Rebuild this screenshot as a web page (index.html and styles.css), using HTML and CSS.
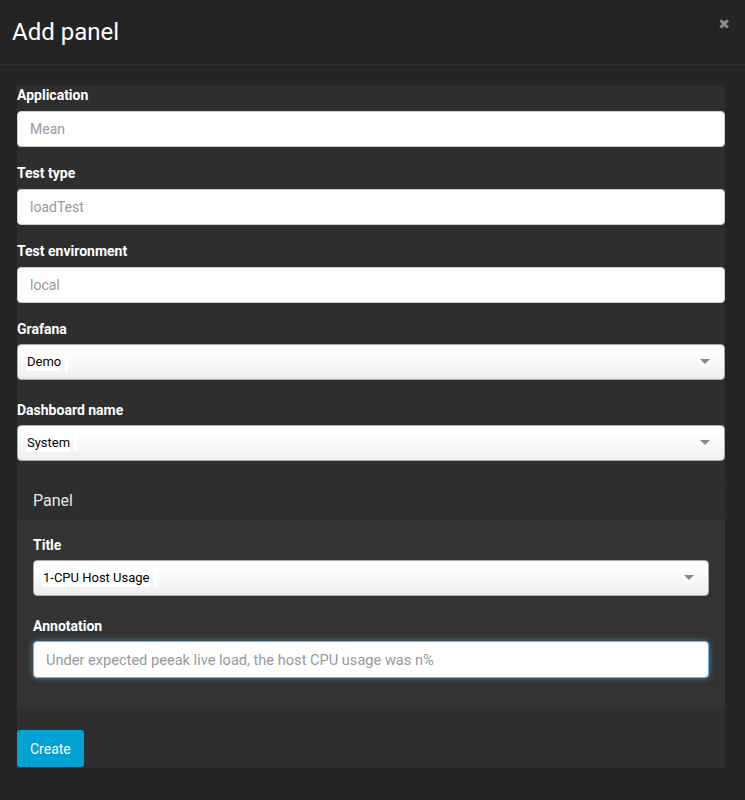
FILE: index.html
```html
<!DOCTYPE html>
<html>
<head>
<meta charset="utf-8">
<link rel="stylesheet" href="styles.css">
</head>
<body>
<div class="modal">
  <div class="modal-header">
    <h1 class="modal-title">Add panel</h1>
    <span class="close">&#x2716;</span>
  </div>
  <div class="modal-body">
    <form class="form">
      <div class="group group-text">
        <label class="label">Application</label>
        <input class="input" placeholder="Mean">
      </div>
      <div class="group group-text">
        <label class="label">Test type</label>
        <input class="input" placeholder="loadTest">
      </div>
      <div class="group group-text">
        <label class="label">Test environment</label>
        <input class="input" placeholder="local">
      </div>
      <div class="group group-select">
        <label class="label">Grafana</label>
        <div class="select"><span class="chosen">Demo</span><span class="cursor"></span><span class="arrow"></span></div>
      </div>
      <div class="group group-select">
        <label class="label">Dashboard name</label>
        <div class="select"><span class="chosen">System</span><span class="cursor"></span><span class="arrow"></span></div>
      </div>
      <div class="panel">
        <div class="panel-heading">Panel</div>
        <div class="panel-body">
          <div class="group group-select">
            <label class="label">Title</label>
            <div class="select"><span class="chosen">1-CPU Host Usage</span><span class="cursor"></span><span class="arrow"></span></div>
          </div>
          <div class="group">
            <label class="label">Annotation</label>
            <input class="input input-focus" placeholder="Under expected peeak live load, the host CPU usage was n%">
          </div>
        </div>
      </div>
      <button type="button" class="btn">Create</button>
    </form>
  </div>
</div>
</body>
</html>
```
FILE: styles.css
```css
* { box-sizing: border-box; }
html, body {
  margin: 0;
  padding: 0;
  background: #242424;
  font-family: Roboto, "Liberation Sans", sans-serif;
  color: #fff;
}
.modal {
  width: 745px;
  height: 800px;
  background: #242424;
}
.modal-header {
  position: relative;
  height: 65px;
  border-bottom: 1px solid #2c2c2c;
  padding: 0 12px;
  display: flex;
  align-items: center;
}
.modal-title {
  margin: 0;
  font-size: 24px;
  font-weight: 400;
  color: #fff;
  line-height: 30px;
}
.close {
  position: absolute;
  right: 15px;
  top: 16px;
  font-size: 14px;
  color: #8a8a8a;
  font-family: "DejaVu Sans", sans-serif;
}
.modal-body {
  padding: 20px 20px 32px 17px;
}
.form {
  background: #2e2e2e;
  display: flex;
  flex-direction: column;
}
.group {
  display: flex;
  flex-direction: column;
  margin-bottom: 16px;
}
.group-select { margin-bottom: 20px; }
.label {
  font-size: 14px;
  font-weight: 700;
  line-height: 20px;
  margin-bottom: 5px;
  color: #fff;
}
.group-text .label { margin-bottom: 6px; }
.input {
  height: 36px;
  width: 100%;
  border: 1px solid #cfcfcf;
  border-radius: 4px;
  background: #fff;
  padding: 0 12px;
  font-family: Roboto, "Liberation Sans", sans-serif;
  font-size: 14px;
  color: #555;
  outline: none;
}
.input::placeholder { color: #999; }
.input-focus {
  border-color: #66afe9;
  box-shadow: 0 0 6px rgba(102, 175, 233, 0.6);
  height: 37px;
  font-size: 14.6px;
}
.select {
  position: relative;
  height: 36px;
  border: 1px solid #aaa;
  border-radius: 4px;
  background: linear-gradient(#fff 20%, #eee);
  display: flex;
  align-items: center;
  padding-left: 8px;
}
.chosen {
  background: #fff;
  color: #000;
  font-size: 13px;
  line-height: 18px;
  padding: 0 0 0 1px;
}
.cursor {
  width: 3px;
  height: 18px;
  background: #fff;
  margin-left: 4px;
}
.arrow {
  position: absolute;
  right: 14px;
  top: 14px;
  width: 0;
  height: 0;
  border-left: 5px solid transparent;
  border-right: 5px solid transparent;
  border-top: 5px solid #888;
}
.panel {
  background: #333;
  margin-bottom: 21px;
}
.panel-heading {
  height: 39px;
  background: #2e2e2e;
  border-top: 1px solid #2a2a2a;
  border-bottom: 1px solid #2a2a2a;
  padding: 0 16px;
  display: flex;
  align-items: center;
  font-size: 16px;
  color: #e6e6e6;
}
.panel-body {
  padding: 15px 16px 15px 16px;
}
.panel-body .group:last-child { margin-bottom: 16px; }
.btn {
  align-self: flex-start;
  height: 37px;
  padding: 0 13px;
  background: #00a2d4;
  color: #fff;
  border: none;
  border-radius: 3px;
  font-family: Roboto, "Liberation Sans", sans-serif;
  font-size: 14px;
  margin-bottom: 1px;
}
```
